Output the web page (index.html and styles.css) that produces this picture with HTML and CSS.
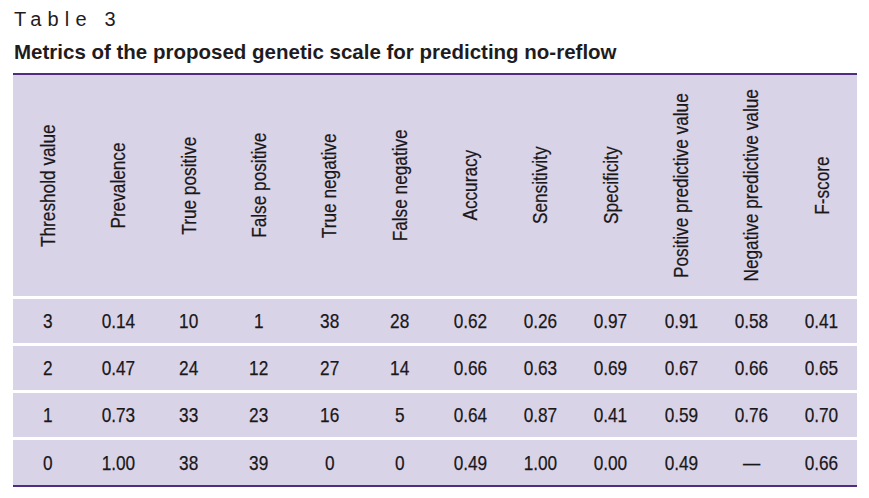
FILE: index.html
```html
<!DOCTYPE html>
<html lang="en">
<head>
<meta charset="utf-8">
<title>Table 3</title>
<link rel="stylesheet" href="styles.css">
</head>
<body>
<div class="page">
  <div class="label">Table 3</div>
  <h1 class="title">Metrics of the proposed genetic scale for predicting no-reflow</h1>
  <table class="metrics">
    <thead>
      <tr>
        <th><div class="hcell"><span class="vt">Threshold value</span></div></th>
        <th><div class="hcell"><span class="vt">Prevalence</span></div></th>
        <th><div class="hcell"><span class="vt">True positive</span></div></th>
        <th><div class="hcell"><span class="vt">False positive</span></div></th>
        <th><div class="hcell"><span class="vt">True negative</span></div></th>
        <th><div class="hcell"><span class="vt">False negative</span></div></th>
        <th><div class="hcell"><span class="vt">Accuracy</span></div></th>
        <th><div class="hcell"><span class="vt">Sensitivity</span></div></th>
        <th><div class="hcell"><span class="vt">Specificity</span></div></th>
        <th><div class="hcell"><span class="vt">Positive predictive value</span></div></th>
        <th><div class="hcell"><span class="vt">Negative predictive value</span></div></th>
        <th><div class="hcell"><span class="vt">F-score</span></div></th>
      </tr>
    </thead>
    <tbody>
      <tr><td><span class="n">3</span></td><td><span class="n">0.14</span></td><td><span class="n">10</span></td><td><span class="n">1</span></td><td><span class="n">38</span></td><td><span class="n">28</span></td><td><span class="n">0.62</span></td><td><span class="n">0.26</span></td><td><span class="n">0.97</span></td><td><span class="n">0.91</span></td><td><span class="n">0.58</span></td><td><span class="n">0.41</span></td></tr>
      <tr><td><span class="n">2</span></td><td><span class="n">0.47</span></td><td><span class="n">24</span></td><td><span class="n">12</span></td><td><span class="n">27</span></td><td><span class="n">14</span></td><td><span class="n">0.66</span></td><td><span class="n">0.63</span></td><td><span class="n">0.69</span></td><td><span class="n">0.67</span></td><td><span class="n">0.66</span></td><td><span class="n">0.65</span></td></tr>
      <tr><td><span class="n">1</span></td><td><span class="n">0.73</span></td><td><span class="n">33</span></td><td><span class="n">23</span></td><td><span class="n">16</span></td><td><span class="n">5</span></td><td><span class="n">0.64</span></td><td><span class="n">0.87</span></td><td><span class="n">0.41</span></td><td><span class="n">0.59</span></td><td><span class="n">0.76</span></td><td><span class="n">0.70</span></td></tr>
      <tr><td><span class="n">0</span></td><td><span class="n">1.00</span></td><td><span class="n">38</span></td><td><span class="n">39</span></td><td><span class="n">0</span></td><td><span class="n">0</span></td><td><span class="n">0.49</span></td><td><span class="n">1.00</span></td><td><span class="n">0.00</span></td><td><span class="n">0.49</span></td><td><span class="n">—</span></td><td><span class="n">0.66</span></td></tr>
    </tbody>
  </table>
</div>
</body>
</html>
```

FILE: styles.css
```css
html, body {
  margin: 0;
  padding: 0;
  background: #ffffff;
}

.page {
  padding: 7px 12px 0 13px;
  color: #1f1c1e;
  font-family: "Liberation Sans", Arial, sans-serif;
}

.label {
  margin: 0 0 0 1px;
  font-size: 20px;
  line-height: 24px;
  letter-spacing: 6.2px;
  font-weight: normal;
}

.title {
  margin: 8.5px 0 0 1px;
  font-size: 20.5px;
  line-height: 24px;
  font-weight: bold;
}

.metrics {
  margin-top: 9.5px;
  width: 844px;
  table-layout: fixed;
  border-collapse: separate;
  border-spacing: 0;
  border-top: 2px solid #4f2c80;
  border-bottom: 2px solid #4f2c80;
  font-family: "Liberation Sans", Arial, sans-serif;
  font-size: 21px;
  color: #1a1719;
}

.metrics th,
.metrics td {
  background: #d9d3e8;
  padding: 0;
  text-align: center;
  vertical-align: middle;
  font-weight: normal;
}

.hcell {
  height: 221px;
  display: flex;
  align-items: center;
  justify-content: center;
}

.metrics td {
  height: 44px;
  border-top: 3px solid #ffffff;
  line-height: 24px;
}

.metrics tbody tr:last-child td {
  height: 45px;
}

.vt {
  display: block;
  flex: none;
  writing-mode: vertical-rl;
  transform: rotate(180deg) scaleY(0.82);
  white-space: nowrap;
  line-height: 24px;
  -webkit-text-stroke: 0.25px currentColor;
}

.n {
  display: inline-block;
  transform: scaleX(0.82);
  white-space: nowrap;
  -webkit-text-stroke: 0.25px currentColor;
}
```
